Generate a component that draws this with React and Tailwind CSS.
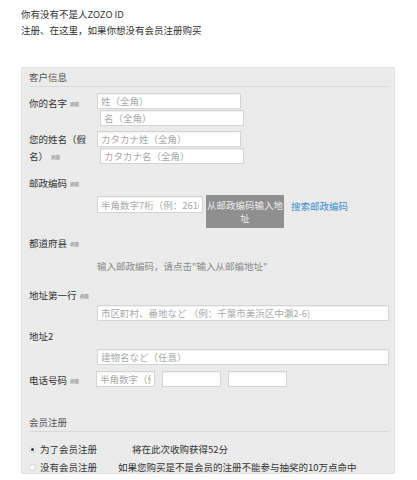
const Badge = () => (
  <span className="ml-[3px] inline-block h-[5px] w-[9px] bg-[#d2d2d2] text-center align-middle text-[4px] leading-[5px] text-[#888]">
    必須
  </span>
);

const Field = ({ placeholder = '', className = '' }) => (
  <input
    placeholder={placeholder}
    className={`block h-[16px] border border-[#d4d4d4] bg-white px-[3px] text-[9.5px] leading-[14px] text-[#333] shadow-[inset_0_1px_1px_rgba(0,0,0,0.06)] outline-none placeholder:text-[#a9a9a9] ${className}`}
  />
);

const Label = ({ children, badge = true, className = '' }) => (
  <div className={`leading-[17px] text-[#333] ${className}`}>
    {children}
    {badge && <Badge />}
  </div>
);

const Radio = ({ checked }) => (
  <span className="flex h-[7px] w-[7px] flex-shrink-0 items-center justify-center rounded-full border border-[#d0d0d0] bg-white">
    {checked && <span className="h-[3px] w-[3px] rounded-full bg-[#333]" />}
  </span>
);

export default function App() {
  return (
    <div className="h-[480px] w-[417px] overflow-hidden bg-white font-['Noto_Sans_CJK_SC','Noto_Sans',sans-serif] text-[9.5px] text-[#333]">
      {/* intro */}
      <div className="pl-[21px] pt-[6px] leading-[16px]">
        <p>你有没有不是人ZOZO ID</p>
        <p>注册、在这里，如果你想没有会员注册购买</p>
      </div>

      {/* form panel */}
      <div className="ml-[21px] mt-[29px] h-[407px] w-[374px] overflow-hidden border border-[#e2e2e2] bg-[#ebebeb] pl-[7px] pr-[5px]">
        <div className="h-[19px] border-b border-[#d9d9d9] leading-[18px] text-[#555]">客户信息</div>

        {/* name */}
        <div className="mt-[6px] flex">
          <Label className="w-[68px] pt-[2px]">你的名字</Label>
          <div className="flex flex-col">
            <Field placeholder="姓（全角）" className="w-[144px]" />
            <Field placeholder="名（全角）" className="ml-[3px] mt-[1px] w-[144px]" />
          </div>
        </div>

        {/* kana */}
        <div className="mt-[5px] flex">
          <Label className="w-[68px] pr-[6px]">您的姓名（假名）</Label>
          <div className="flex flex-col">
            <Field placeholder="カタカナ姓（全角）" className="w-[144px]" />
            <Field placeholder="カタカナ名（全角）" className="ml-[3px] mt-[1px] w-[144px]" />
          </div>
        </div>

        {/* postal code */}
        <Label className="mt-[10px]">邮政编码</Label>
        <div className="mt-[3px] flex items-start pl-[68px]">
          <Field placeholder="半角数字7桁（例：2610023）" className="mt-[1px] h-[17px] w-[106px]" />
          <button className="ml-[3px] h-[33px] w-[78px] bg-[#8f8f8f] px-0 text-center text-[9.5px] leading-[13px] text-[#ececec]">
            从邮政编码输入地址
          </button>
          <a className="ml-[7px] mt-[3px] leading-[17px] text-[#3b8ed0]">搜索邮政编码</a>
        </div>

        {/* prefecture */}
        <Label className="mt-[7px]">都道府县</Label>
        <div className="mt-[6px] pl-[68px] leading-[17px] text-[#8a8a8a]">输入邮政编码，请点击"输入从邮编地址"</div>

        {/* address 1 */}
        <Label className="mt-[12px]">地址第一行</Label>
        <Field placeholder="市区町村、番地など （例：千葉市美浜区中瀬2-6)" className="ml-[68px] mt-[1px] w-[292px]" />

        {/* address 2 */}
        <Label badge={false} className="mt-[7px]">地址2</Label>
        <Field placeholder="建物名など（任意）" className="ml-[68px] mt-[4px] w-[292px]" />

        {/* phone */}
        <div className="mt-[6px] flex items-start">
          <Label className="w-[67px] pt-[1px]">电话号码</Label>
          <div className="flex gap-[7px]">
            <Field placeholder="半角数字（例：09012345678）" className="w-[59px]" />
            <Field className="w-[59px]" />
            <Field className="w-[59px]" />
          </div>
        </div>

        {/* membership */}
        <div className="mt-[24px] h-[19px] border-b border-[#d9d9d9] leading-[18px] text-[#555]">会员注册</div>
        <div className="mt-[9px] flex items-center leading-[17px]">
          <Radio checked />
          <span className="ml-[4px] w-[92px]">为了会员注册</span>
          <span>将在此次收购获得52分</span>
        </div>
        <div className="mt-[1px] flex items-center leading-[17px]">
          <Radio />
          <span className="ml-[4px] w-[78px]">没有会员注册</span>
          <span>如果您购买是不是会员的注册不能参与抽奖的10万点命中</span>
        </div>
      </div>
    </div>
  );
}
